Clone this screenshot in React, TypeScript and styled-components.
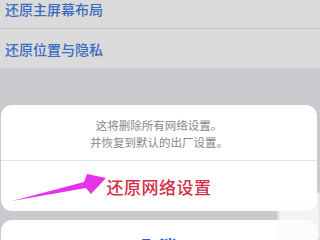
import React from 'react';
import styled, { createGlobalStyle } from 'styled-components';

const Global = createGlobalStyle`
  html, body {
    margin: 0;
    padding: 0;
    background: #c9c9ce;
  }
  body {
    font-family: "Noto Sans CJK SC", "Noto Sans", sans-serif;
  }
`;

const Screen = styled.div`
  position: relative;
  width: 320px;
  height: 240px;
  overflow: hidden;
  background: #c9c9ce;
  display: flex;
  flex-direction: column;
`;

const List = styled.div`
  margin-top: -11px;
  background: #dadada;
`;

const Row = styled.div`
  height: 39px;
  display: flex;
  align-items: center;
  padding-left: 5px;
  font-size: 14px;
  font-weight: 500;
  color: #3a6cc0;
  border-bottom: 1px solid #c6c6c8;
  &:last-child {
    border-bottom: none;
  }
`;

const Sheet = styled.div`
  margin-top: 37px;
  display: flex;
  flex-direction: column;
  gap: 9px;
  padding: 0 3px 0 1px;
`;

const Card = styled.div`
  background: #ffffff;
  border-radius: 11px;
  overflow: hidden;
`;

const Message = styled.div`
  padding: 12px 0 9px;
  text-align: center;
  font-size: 11.5px;
  line-height: 17px;
  color: #87878c;
  border-bottom: 1px solid #e2e2e4;
`;

const Action = styled.div<{ $tone: 'red' | 'blue' }>`
  height: 50px;
  display: flex;
  align-items: center;
  justify-content: center;
  font-size: 17px;
  letter-spacing: 0.5px;
  color: ${p => (p.$tone === 'red' ? '#d22f48' : '#2b5fc6')};
  font-weight: ${p => (p.$tone === 'red' ? 500 : 700)};
`;

const Arrow = styled.svg`
  position: absolute;
  left: 0;
  top: 0;
  pointer-events: none;
`;

const Watermark = styled.div`
  position: absolute;
  left: 278px;
  top: 193px;
  width: 42px;
  height: 47px;
  background: linear-gradient(to bottom, rgba(255, 255, 255, 0.75), rgba(250, 250, 250, 0.9));
  filter: blur(1px);
`;

export default function App() {
  return (
    <>
      <Global />
      <Screen>
        <List>
          <Row>还原主屏幕布局</Row>
          <Row>还原位置与隐私</Row>
        </List>
        <Sheet>
          <Card>
            <Message>
              这将删除所有网络设置。
              <br />
              并恢复到默认的出厂设置。
            </Message>
            <Action $tone="red">还原网络设置</Action>
          </Card>
          <Card>
            <Action $tone="blue">取消</Action>
          </Card>
        </Sheet>
        <Arrow width="320" height="240" viewBox="0 0 320 240">
          <polygon
            points="12,201 84,182 87,174 106,178 91,194 86,188"
            fill="#e533e8"
          />
        </Arrow>
        <Watermark />
      </Screen>
    </>
  );
}
